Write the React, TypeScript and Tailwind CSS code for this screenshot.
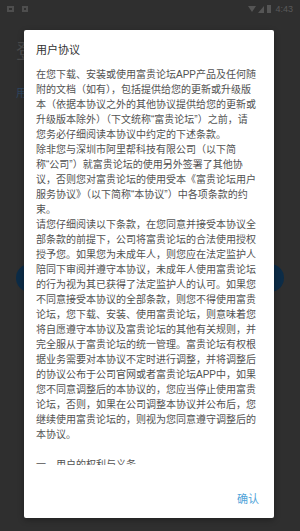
import React from "react";

const p1 = [
  "在您下载、安装或使用富贵论坛APP产品及任何随",
  "附的文档（如有），包括提供给您的更新或升级版",
  "本（依据本协议之外的其他协议提供给您的更新或",
  "升级版本除外）（下文统称\u201c富贵论坛\u201d）之前，请",
  "您务必仔细阅读本协议中约定的下述条款。",
  "除非您与深圳市阿里帮科技有限公司（以下简",
  "称\u201c公司\u201d）就富贵论坛的使用另外签署了其他协",
  "议，否则您对富贵论坛的使用受本《富贵论坛用户",
  "服务协议》（以下简称\u201c本协议\u201d）中各项条款的约",
  "束。",
  "请您仔细阅读以下条款，在您同意并接受本协议全",
  "部条款的前提下，公司将富贵论坛的合法使用授权",
  "授予您。如果您为未成年人，则您应在法定监护人",
  "陪同下审阅并遵守本协议，未成年人使用富贵论坛",
  "的行为视为其已获得了法定监护人的认可。如果您",
  "不同意接受本协议的全部条款，则您不得使用富贵",
  "论坛，您下载、安装、使用富贵论坛，则意味着您",
  "将自愿遵守本协议及富贵论坛的其他有关规则，并",
  "完全服从于富贵论坛的统一管理。富贵论坛有权根",
  "据业务需要对本协议不定时进行调整，并将调整后",
  "的协议公布于公司官网或者富贵论坛APP中，如果",
  "您不同意调整后的本协议的，您应当停止使用富贵",
  "论坛，否则，如果在公司调整本协议并公布后，您",
  "继续使用富贵论坛的，则视为您同意遵守调整后的",
  "本协议。",
];

export default function App() {
  return (
    <div
      className="w-[300px] h-[531px] bg-[#2f2f2f] flex flex-col overflow-hidden relative"
      style={{ fontFamily: '"Liberation Sans", "Noto Sans CJK SC", sans-serif' }}
    >
      {/* status bar */}
      <div className="h-[16px] flex items-center justify-between px-[7px] pt-[2px]">
        <div className="flex items-center gap-[8px]">
          <div className="w-[7px] h-[6px] border-[2px] border-[#4e4e4e]" />
          <div className="w-[6px] h-[6px] border-[2px] border-[#4e4e4e]" />
        </div>
        <div className="flex items-center gap-[2px] text-[9px] text-[#5a5a5a]">
          <svg width="8" height="7" viewBox="0 0 8 7">
            <path d="M0 0 L8 0 L4 6 Z" fill="#555" />
          </svg>
          <svg width="6" height="7" viewBox="0 0 6 7">
            <path d="M6 0 L6 7 L0 7 Z" fill="#555" />
          </svg>
          <div className="w-[4px] h-[8px] bg-[#555] ml-[1px]" />
          <span className="ml-[2px] leading-none">4:43</span>
        </div>
      </div>

      {/* dimmed background page */}
      <div className="flex flex-col px-[16px] pt-[24px]">
        <div className="text-[20px] leading-[24px] text-[#4a4a4a]">登录</div>
        <div className="mt-[22px] text-[11px] leading-[14px] text-[#2e4660]">用户名</div>
        <div className="mt-[164px] h-[28px] rounded-full bg-[#0c2c47]" />
      </div>

      {/* dialog */}
      <div className="absolute left-[24px] top-[30px] w-[250px] h-[488px] bg-white rounded-[2px] flex flex-col shadow-[0_2px_6px_rgba(0,0,0,0.3)]">
        <div className="pt-[12px] px-[12px] text-[11px] leading-[16px] text-[#333333]">
          用户协议
        </div>
        <div className="mt-[9px] h-[398px] overflow-hidden px-[12px] text-[10px] leading-[15px] text-[#525252]">
          {p1.map((l, i) => (
            <div key={i} className="whitespace-nowrap">
              {l}
            </div>
          ))}
          <div className="mt-[15px] whitespace-nowrap">一、用户的权利与义务</div>
        </div>
        <div className="flex-1 flex items-end justify-end pr-[15px] pb-[11px]">
          <span className="text-[11px] leading-[16px] text-[#4fa3d9]">确认</span>
        </div>
      </div>
    </div>
  );
}
